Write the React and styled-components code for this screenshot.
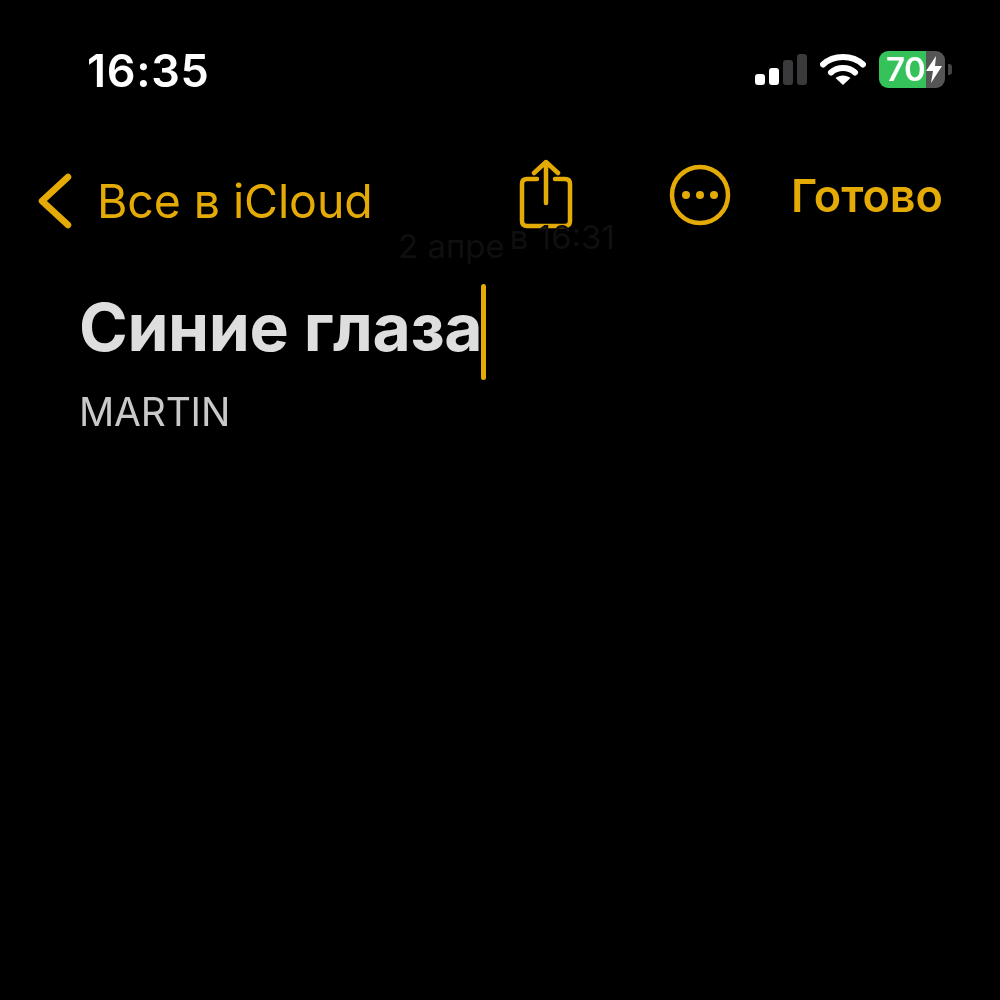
import styled, { createGlobalStyle } from "styled-components";

const GOLD = "#e4aa05";

const GlobalStyle = createGlobalStyle`
  html, body {
    margin: 0;
    padding: 0;
    background: #000;
  }
  * {
    box-sizing: border-box;
  }
`;

const Screen = styled.div`
  width: 1000px;
  height: 1000px;
  background: #000;
  overflow: hidden;
  font-family: Inter, "Liberation Sans", sans-serif;
  filter: blur(0.6px);
`;

const StatusBar = styled.div`
  display: flex;
  align-items: center;
  justify-content: space-between;
  height: 138px;
  padding: 0 55px 0 87px;
`;

const Time = styled.div`
  font-size: 45px;
  font-weight: 600;
  color: #fff;
  letter-spacing: 0.7px;
  margin-top: 2px;
`;

const StatusIcons = styled.div`
  display: flex;
  align-items: center;
  gap: 13px;
`;

const Signal = styled.div`
  display: flex;
  align-items: flex-end;
  gap: 4px;
  height: 31px;
`;

const SignalBar = styled.span`
  width: 10px;
  height: ${(p) => p.$h}px;
  border-radius: 3px;
  background: ${(p) => (p.$on ? "#fff" : "#3a3a3c")};
`;

const Battery = styled.div`
  position: relative;
  display: flex;
  align-items: center;
  width: 66px;
  height: 37px;
  padding-left: 7px;
  border-radius: 9px;
  background: linear-gradient(90deg, #35c25a 0 71%, #555 71% 100%);
  font-size: 33px;
  font-weight: 600;
  color: #fff;
  letter-spacing: -0.5px;

  &::after {
    content: "";
    position: absolute;
    right: -7px;
    top: 13px;
    width: 4px;
    height: 11px;
    border-radius: 0 3px 3px 0;
    background: #444;
  }
`;

const Nav = styled.div`
  display: flex;
  align-items: center;
  height: 120px;
  padding: 0 57px 0 38px;
`;

const BackLink = styled.div`
  display: flex;
  align-items: center;
  gap: 25px;
  font-size: 46.5px;
  color: ${GOLD};
  width: 480px;
  letter-spacing: -0.1px;
  margin-top: 6px;
`;

const NavIcon = styled.svg`
  display: block;
  flex: none;
  margin-right: ${(p) => p.$gap || 0}px;
  margin-top: ${(p) => p.$shift || 0}px;
`;

const Done = styled.div`
  font-size: 45px;
  font-weight: 600;
  color: ${GOLD};
  margin-left: auto;
  line-height: 1;
  margin-top: -6px;
`;

const DateLine = styled.div`
  display: flex;
  align-items: flex-start;
  margin-top: -37px;
  padding-left: 398px;
  height: 44px;
  font-size: 33px;
  line-height: 44px;
  color: #0f0f0f;
`;

const DatePart = styled.span`
  margin-top: ${(p) => p.$top}px;
  margin-left: ${(p) => p.$left || 0}px;
`;

const Note = styled.div`
  padding: 19px 0 0 79px;
`;

const TitleRow = styled.div`
  display: flex;
  align-items: center;
  height: 96px;
`;

const Title = styled.div`
  font-size: 66px;
  font-weight: 700;
  color: #dedede;
  letter-spacing: -0.4px;
  margin-bottom: 11px;
`;

const Caret = styled.div`
  width: 5px;
  height: 96px;
  border-radius: 3px;
  background: ${GOLD};
  margin-left: -1px;
`;

const Body = styled.div`
  margin-top: 8px;
  font-size: 39px;
  line-height: 48px;
  color: #c9c9c9;
  letter-spacing: -0.2px;
`;

function WifiIcon() {
  return (
    <svg width="46" height="34" viewBox="0 0 46 34" fill="none">
      <path d="M3 12.5C13.5 2.5 32.5 2.5 43 12.5" stroke="#fff" strokeWidth="6" strokeLinecap="round" />
      <path d="M11 20.5C17.5 14.5 28.5 14.5 35 20.5" stroke="#fff" strokeWidth="6" strokeLinecap="round" />
      <path d="M23 33L15.5 26C19.5 22.5 26.5 22.5 30.5 26Z" fill="#fff" />
    </svg>
  );
}

function BoltIcon() {
  return (
    <svg width="16" height="27" viewBox="0 0 16 27" style={{ marginLeft: 1 }}>
      <path d="M10 0L0 15H7L5 27L16 10H9Z" fill="#fff" />
    </svg>
  );
}

export default function App() {
  return (
    <>
      <GlobalStyle />
      <Screen>
        <StatusBar>
          <Time>16:35</Time>
          <StatusIcons>
            <Signal>
              <SignalBar $h={11} $on />
              <SignalBar $h={17} $on />
              <SignalBar $h={25} />
              <SignalBar $h={31} />
            </Signal>
            <WifiIcon />
            <Battery>
              70
              <BoltIcon />
            </Battery>
          </StatusIcons>
        </StatusBar>

        <Nav>
          <BackLink>
            <svg width="34" height="56" viewBox="0 0 34 56" fill="none">
              <path d="M30 4L4 28L30 52" stroke={GOLD} strokeWidth="6.5" strokeLinecap="round" strokeLinejoin="round" />
            </svg>
            Все в iCloud
          </BackLink>
          <NavIcon $gap={95} $shift={-9} width="56" height="70" viewBox="0 0 56 70" fill="none">
            <path d="M19 20H9C5 20 4 22 4 25V62C4 65 5 67 9 67H47C51 67 52 65 52 62V25C52 22 51 20 47 20H37" stroke={GOLD} strokeWidth="4.5" strokeLinecap="round" />
            <path d="M28 3V44M16 14L28 3L40 14" stroke={GOLD} strokeWidth="4.5" strokeLinecap="round" strokeLinejoin="round" />
          </NavIcon>
          <NavIcon $shift={-6} width="62" height="62" viewBox="0 0 62 62" fill="none">
            <circle cx="31" cy="31" r="28" stroke={GOLD} strokeWidth="4.5" />
            <circle cx="17" cy="31" r="4" fill={GOLD} />
            <circle cx="31" cy="31" r="4" fill={GOLD} />
            <circle cx="45" cy="31" r="4" fill={GOLD} />
          </NavIcon>
          <Done>Готово</Done>
        </Nav>

        <DateLine>
          <DatePart $top={3}>2 апре</DatePart>
          <DatePart $top={-6} $left={5}>в 16:31</DatePart>
        </DateLine>

        <Note>
          <TitleRow>
            <Title>Синие глаза</Title>
            <Caret />
          </TitleRow>
          <Body>MARTIN</Body>
        </Note>
      </Screen>
    </>
  );
}
